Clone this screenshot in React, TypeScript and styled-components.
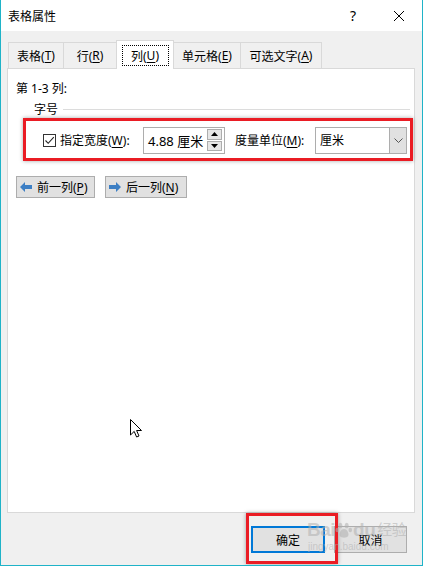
import React from 'react'
import styled, { createGlobalStyle } from 'styled-components'

const GlobalStyle = createGlobalStyle`
    html, body {
        margin: 0;
        padding: 0;
        background: #ffffff;
    }
    * {
        box-sizing: border-box;
    }
`

const FONT = `"Noto Sans", "Noto Sans CJK SC", sans-serif`

const Window = styled.div`
    position: relative;
    width: 423px;
    height: 566px;
    border: 1px solid #1fb3c8;
    border-top: none;
    display: flex;
    flex-direction: column;
    font-family: ${FONT};
    font-size: 12px;
    color: #000;
    overflow: hidden;
`

const TitleBar = styled.div`
    height: 31px;
    background: #ffffff;
    display: flex;
    align-items: center;
    padding-left: 7px;
    flex-shrink: 0;
`

const Title = styled.div`
    flex: 1;
    font-size: 12px;
    padding-top: 1px;
`

const TitleButton = styled.div<{ $w: number }>`
    width: ${p => p.$w}px;
    height: 31px;
    display: flex;
    align-items: center;
    justify-content: center;
    font-size: 14px;
`

const Body = styled.div`
    flex: 1;
    background: #f0f0f0;
    display: flex;
    flex-direction: column;
    padding: 9px 7px 0 6px;
`

const TabRow = styled.div`
    height: 29px;
    display: flex;
    align-items: flex-start;
    padding-left: 1px;
    position: relative;
    z-index: 1;
`

const Tab = styled.div<{ $w: number; $active?: boolean }>`
    width: ${p => p.$w}px;
    height: ${p => (p.$active ? 29 : 26)}px;
    margin-top: ${p => (p.$active ? 0 : 2)}px;
    margin-left: -1px;
    background: ${p => (p.$active ? '#ffffff' : '#f0f0f0')};
    border: 1px solid #d9d9d9;
    border-bottom: none;
    display: flex;
    align-items: center;
    justify-content: center;
    padding-top: ${p => (p.$active ? 1 : 0)}px;

    &:first-child {
        margin-left: 0;
    }
`

const FocusRing = styled.span`
    display: inline-flex;
    align-items: center;
    justify-content: center;
    width: 47px;
    height: 21px;
    border: 1px dotted #000;
`

const Key = styled.span`
    text-decoration: underline;
    text-underline-offset: 2px;
`

const Panel = styled.div`
    height: 445px;
    margin-top: -1px;
    background: #ffffff;
    border: 1px solid #d9d9d9;
    padding: 12px 1px 0 8px;
    display: flex;
    flex-direction: column;
`

const Caption = styled.div`
    height: 16px;
    line-height: 16px;
`

const GroupHeader = styled.div`
    display: flex;
    align-items: center;
    height: 16px;
    margin: 4px 3px 0 18px;
    gap: 5px;

    &::after {
        content: '';
        flex: 1;
        height: 1px;
        background: #dcdcdc;
    }
`

const HighlightRow = styled.div`
    margin: 1px 0 0 7px;
    height: 43px;
    border: 3px solid #ea1c24;
    box-shadow: 0 0 4px rgba(0, 0, 0, 0.35);
    display: flex;
    align-items: center;
    padding: 1px 0 0 17px;
`

const CheckBox = styled.div`
    width: 13px;
    height: 13px;
    border: 1px solid #333;
    margin-right: 4px;
    display: flex;
    align-items: center;
    justify-content: center;
    background: #fff;
`

const Label = styled.div<{ $w: number }>`
    width: ${p => p.$w}px;
    white-space: nowrap;
`

const InputBox = styled.div`
    width: 82px;
    height: 27px;
    border: 1px solid #adadad;
    display: flex;
    align-items: center;
    padding-left: 4px;
    margin-right: 10px;
    background: #fff;
`

const InputText = styled.div`
    flex: 1;
    font-size: 13px;
`

const Spinner = styled.div`
    width: 15px;
    height: 22px;
    margin-right: 2px;
    display: flex;
    flex-direction: column;
    gap: 1px;
`

const SpinButton = styled.div`
    flex: 1;
    background: #e6e6e6;
    border: 1px solid #adadad;
    display: flex;
    align-items: center;
    justify-content: center;
`

const Select = styled.div`
    width: 92px;
    height: 27px;
    border: 1px solid #adadad;
    display: flex;
    background: #fff;
`

const SelectValue = styled.div`
    flex: 1;
    display: flex;
    align-items: center;
    padding-left: 4px;
`

const SelectArrow = styled.div`
    width: 17px;
    background: #e1e1e1;
    border-left: 1px solid #adadad;
    display: flex;
    align-items: center;
    justify-content: center;
`

const NavRow = styled.div`
    display: flex;
    gap: 10px;
    margin-top: 15px;
`

const Button = styled.div<{ $w: number; $default?: boolean }>`
    width: ${p => p.$w}px;
    height: ${p => (p.$default ? 24 : 22)}px;
    background: #e1e1e1;
    border: ${p => (p.$default ? '2px solid #0078d7' : '1px solid #adadad')};
    display: flex;
    align-items: center;
    justify-content: center;
    gap: 4px;
`

const NavButton = styled(Button)`
    justify-content: flex-start;
    padding-left: 2px;
`

const Footer = styled.div`
    position: relative;
    height: 52px;
    display: flex;
    justify-content: flex-end;
    align-items: flex-start;
    gap: 9px;
    padding: 13px 8px 0 0;
`

const FooterButton = styled(Button)`
    height: 27px;
`

const Annotation = styled.div`
    position: absolute;
    left: 239px;
    top: 0;
    width: 92px;
    height: 51px;
    border: 3px solid #ea1c24;
    box-shadow: 0 0 4px rgba(0, 0, 0, 0.35);
    pointer-events: none;
`

const Watermark = styled.div`
    position: absolute;
    left: 306px;
    top: 519px;
    color: rgba(175, 175, 175, 0.55);
    font-family: "Liberation Sans", "Noto Sans CJK SC", sans-serif;
    pointer-events: none;
    display: flex;
    flex-direction: column;
    white-space: nowrap;
`

const MarkLine = styled.div`
    display: flex;
    align-items: center;
    font-size: 19px;
    font-weight: bold;
    line-height: 22px;
    letter-spacing: -0.5px;
`

const MarkCn = styled.span`
    font-size: 15px;
    font-weight: normal;
    margin-left: 2px;
`

const MarkSmall = styled.div`
    font-size: 10px;
    line-height: 12px;
    padding-left: 1px;
`

const Cursor = styled.svg`
    position: absolute;
    left: 129px;
    top: 419px;
`

const LeftArrow = () => (
    <svg width="14" height="12" viewBox="0 0 14 12">
        <path d="M1 6 L6 1 L6 4 L13 4 L13 8 L6 8 L6 11 Z" fill="#3d7fc4" />
    </svg>
)

const RightArrow = () => (
    <svg width="14" height="12" viewBox="0 0 14 12">
        <path d="M13 6 L8 1 L8 4 L1 4 L1 8 L8 8 L8 11 Z" fill="#3d7fc4" />
    </svg>
)

export default function App() {
    return (
        <>
            <GlobalStyle />
            <Window>
                <TitleBar>
                    <Title>表格属性</Title>
                    <TitleButton $w={46}>?</TitleButton>
                    <TitleButton $w={46}>
                        <svg width="12" height="12" viewBox="0 0 12 12">
                            <path d="M1 1 L11 11 M11 1 L1 11" stroke="#000" strokeWidth="1" />
                        </svg>
                    </TitleButton>
                </TitleBar>
                <Body>
                    <TabRow>
                        <Tab $w={56}>表格(<Key>T</Key>)</Tab>
                        <Tab $w={54}>行(<Key>R</Key>)</Tab>
                        <Tab $w={58} $active>
                            <FocusRing>列(<Key>U</Key>)</FocusRing>
                        </Tab>
                        <Tab $w={68}>单元格(<Key>E</Key>)</Tab>
                        <Tab $w={82}>可选文字(<Key>A</Key>)</Tab>
                    </TabRow>
                    <Panel>
                        <Caption>第 1-3 列:</Caption>
                        <GroupHeader>字号</GroupHeader>
                        <HighlightRow>
                            <CheckBox>
                                <svg width="11" height="11" viewBox="0 0 11 11">
                                    <path d="M1.5 5.5 L4.2 8.3 L9.8 2.2" stroke="#222" strokeWidth="1.1" fill="none" />
                                </svg>
                            </CheckBox>
                            <Label $w={83}>指定宽度(<Key>W</Key>):</Label>
                            <InputBox>
                                <InputText>4.88 厘米</InputText>
                                <Spinner>
                                    <SpinButton>
                                        <svg width="7" height="4" viewBox="0 0 7 4">
                                            <path d="M0 4 L3.5 0 L7 4 Z" fill="#000" />
                                        </svg>
                                    </SpinButton>
                                    <SpinButton>
                                        <svg width="7" height="4" viewBox="0 0 7 4">
                                            <path d="M0 0 L3.5 4 L7 0 Z" fill="#000" />
                                        </svg>
                                    </SpinButton>
                                </Spinner>
                            </InputBox>
                            <Label $w={80}>度量单位(<Key>M</Key>):</Label>
                            <Select>
                                <SelectValue>厘米</SelectValue>
                                <SelectArrow>
                                    <svg width="9" height="5" viewBox="0 0 9 5">
                                        <path d="M0.5 0.5 L4.5 4.5 L8.5 0.5" stroke="#555" strokeWidth="1" fill="none" />
                                    </svg>
                                </SelectArrow>
                            </Select>
                        </HighlightRow>
                        <NavRow>
                            <NavButton $w={79}>
                                <LeftArrow />
                                <span>前一列(<Key>P</Key>)</span>
                            </NavButton>
                            <NavButton $w={82}>
                                <RightArrow />
                                <span>后一列(<Key>N</Key>)</span>
                            </NavButton>
                        </NavRow>
                    </Panel>
                    <Footer>
                        <FooterButton $w={74} $default>确定</FooterButton>
                        <FooterButton $w={73}>取消</FooterButton>
                        <Annotation />
                    </Footer>
                </Body>
                <Watermark>
                    <MarkLine>
                        Bai
                        <svg width="18" height="18" viewBox="0 0 20 20">
                            <g fill="rgba(175,175,175,0.55)">
                                <ellipse cx="6" cy="5" rx="2.2" ry="3" />
                                <ellipse cx="13" cy="5" rx="2.2" ry="3" />
                                <ellipse cx="2.5" cy="10" rx="2" ry="2.6" />
                                <ellipse cx="17" cy="10" rx="2" ry="2.6" />
                                <path d="M10 9 C6 9 4 15 5.5 17 C7 19 13 19 14.5 17 C16 15 14 9 10 9 Z" />
                            </g>
                        </svg>
                        du
                        <MarkCn>经验</MarkCn>
                    </MarkLine>
                    <MarkSmall>jingyan.baidu.com</MarkSmall>
                </Watermark>
                <Cursor width="13" height="20" viewBox="0 0 13 20">
                    <path
                        d="M0.5 0.5 L0.5 16 L4.2 12.4 L6.6 18 L9 17 L6.6 11.5 L11.5 11.5 Z"
                        fill="#fff"
                        stroke="#000"
                        strokeWidth="1"
                        strokeLinejoin="round"
                    />
                </Cursor>
            </Window>
        </>
    )
}
